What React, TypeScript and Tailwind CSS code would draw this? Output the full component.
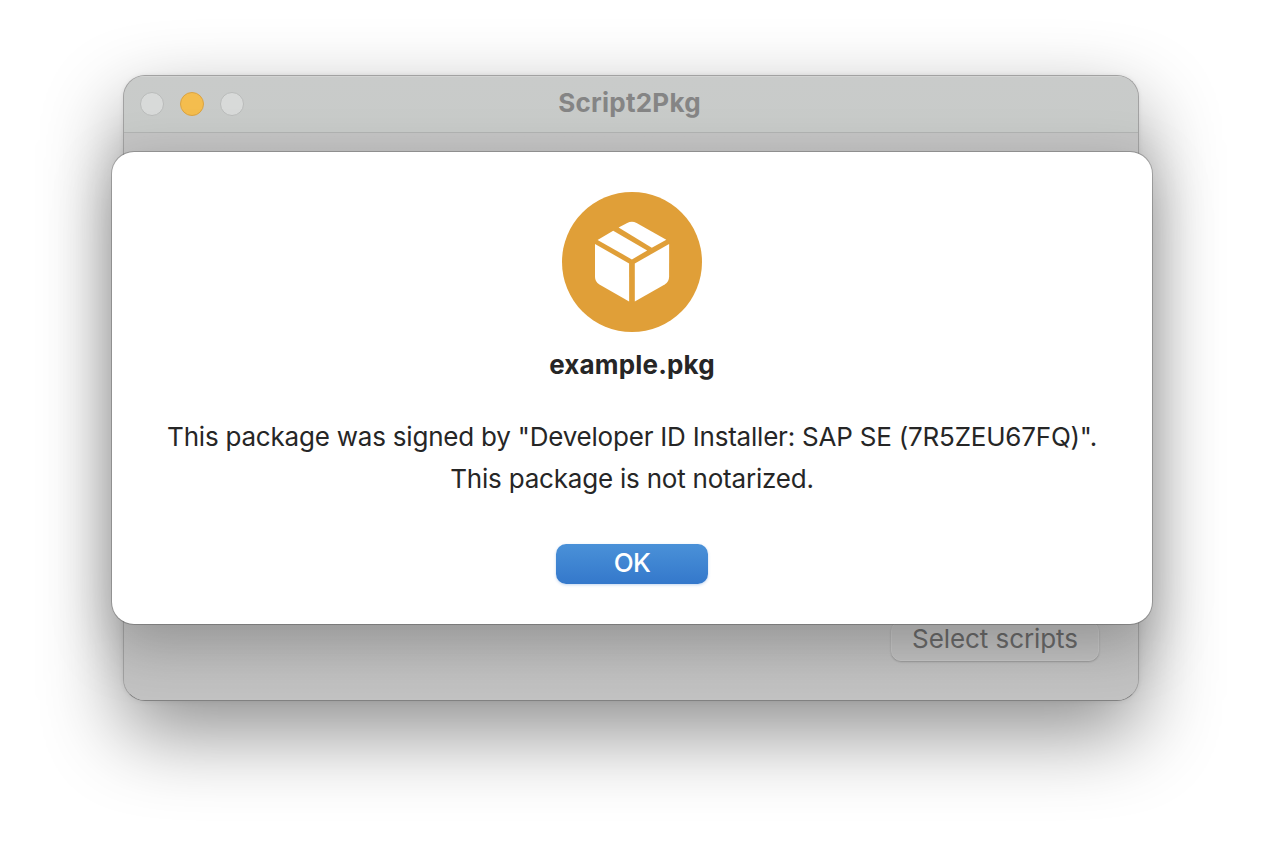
function PackageIcon() {
  return (
    <svg className="block h-[140px] w-[140px]" viewBox="0 0 140 140">
      <circle cx="70" cy="70" r="70" fill="#e09f38" />
      <g fill="#fff">
        <path d="M35.6 48 51.2 38.8 85.2 58.5 69.9 67.4Z" />
        <path d="M56.6 35.6 65.2 30.9Q69.8 28.6 74.6 30.9L104.3 47.7 89.8 55.8Z" />
        <path d="M33 52.1 67.1 71.4V109.6L37.4 92.6Q33 89.8 33 84.8Z" />
        <path d="M107.1 52.1 72.8 71.4V109.6L102.7 92.6Q107.1 89.8 107.1 84.8Z" />
      </g>
    </svg>
  );
}

export default function App() {
  return (
    <div className="relative h-[848px] w-[1264px] overflow-hidden bg-white pt-[75px] pl-[123px] font-['Inter',sans-serif]">
      <div className="flex h-[626px] w-[1016px] flex-col overflow-hidden rounded-[22px] border border-[#a2a2a2] border-b-[#828282] bg-[#c3c3c3] shadow-[0_32px_80px_rgba(0,0,0,0.44),0_0_4px_rgba(0,0,0,0.08)]">
        <header className="relative flex h-[57px] shrink-0 items-center justify-center border-b border-[#b2b4b3] bg-linear-to-b from-[#c9cbca] to-[#c8cbc9] pb-[3px] shadow-[inset_0_1px_0_#d3d4d3]">
          <div className="absolute top-[16px] left-[16px] flex gap-4">
            <span className="h-6 w-6 rounded-full border border-[#b9bbba] bg-[#d8dad9]" />
            <span className="h-6 w-6 rounded-full border border-[#d9a344] bg-[#f4bd4e]" />
            <span className="h-6 w-6 rounded-full border border-[#b9bbba] bg-[#d8dad9]" />
          </div>
          <h1 className="-ml-[3px] text-[26px] leading-8 font-bold tracking-[0.25px] text-[#858585]">Script2Pkg</h1>
        </header>
        <div className="flex flex-1 items-end justify-end bg-linear-to-b from-[#c5c5c5] to-[#c3c3c3] pr-[39px] pb-[39px]">
          <button className="h-[40px] w-[208px] rounded-[10px] border border-[#cbcbcb] bg-[#c4c4c4] pb-[4px] text-[26px] leading-8 tracking-[-0.08px] text-[#6b6b6b] shadow-[0_1px_2px_rgba(0,0,0,0.22)]">
            Select scripts
          </button>
        </div>
      </div>
      <div
        role="dialog"
        className="absolute top-[152px] left-[112px] flex h-[472px] w-[1040px] flex-col items-center rounded-[22px] bg-white pt-[40px] text-[#262626] shadow-[0_0_0_1px_rgba(0,0,0,0.22),0_20px_60px_rgba(0,0,0,0.26)]"
      >
        <PackageIcon />
        <h2 className="mt-[17px] text-[26px] leading-8 font-bold tracking-[0.18px]">example.pkg</h2>
        <p className="mt-[35px] text-center text-[26px] leading-[42px] tracking-[-0.21px] whitespace-nowrap">
          This package was signed by "Developer ID Installer: SAP SE (7R5ZEU67FQ)".
          <br />
          This package is not notarized.
        </p>
        <button className="mt-[44px] flex h-[40px] w-[152px] items-center justify-center rounded-[10px] bg-linear-to-b from-[#4a91d8] to-[#3478cb] pb-[3px] text-[26px] font-medium tracking-[-0.6px] text-white shadow-[0_1px_3px_rgba(52,120,203,0.3)]">
          OK
        </button>
      </div>
    </div>
  );
}
